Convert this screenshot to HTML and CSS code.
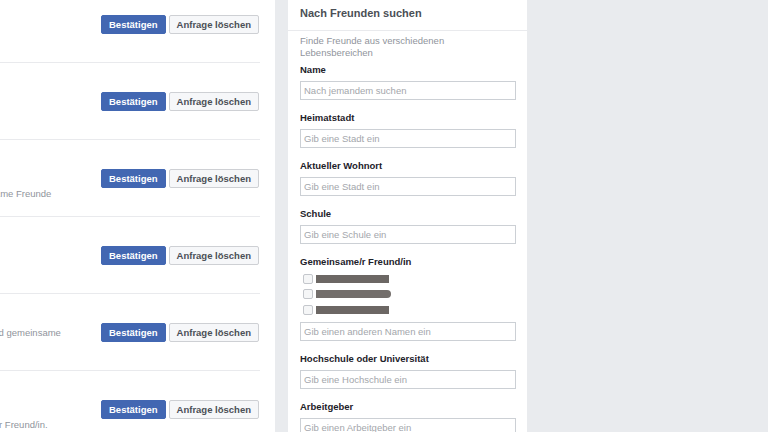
FILE: index.html
```html
<!DOCTYPE html>
<html lang="de">
<head>
    <meta charset="UTF-8">
    <meta name="viewport" content="width=device-width, initial-scale=1.0">
    <title>Freundschaftsanfragen</title>
    <link rel="stylesheet" href="styles.css">
</head>
<body>

    <div class="page">
        <div class="requests">
            <div class="request">
                <div class="photo"></div>
                <div class="info">
                    <a class="name" href="#">Anna Becker</a>
                    <p class="meta">3 gemeinsame Freunde</p>
                </div>
                <div class="actions">
                    <button class="btn confirm">Bestätigen</button>
                    <button class="btn delete">Anfrage löschen</button>
                </div>
            </div>
            <div class="request">
                <div class="photo"></div>
                <div class="info">
                    <a class="name" href="#">Tim Wagner</a>
                    <p class="meta">Wohnt in Hamburg</p>
                </div>
                <div class="actions">
                    <button class="btn confirm">Bestätigen</button>
                    <button class="btn delete">Anfrage löschen</button>
                </div>
            </div>
            <div class="request">
                <div class="photo"></div>
                <div class="info">
                    <a class="name" href="#">Lena Hoffmann</a>
                    <p class="meta">Wohnt in Köln</p>
                    <p class="meta">Jonas und 15 weitere gemeinsame Freunde</p>
                </div>
                <div class="actions">
                    <button class="btn confirm">Bestätigen</button>
                    <button class="btn delete">Anfrage löschen</button>
                </div>
            </div>
            <div class="request">
                <div class="photo"></div>
                <div class="info">
                    <a class="name" href="#">Paul Richter</a>
                    <p class="meta">8 gemeinsame Freunde</p>
                </div>
                <div class="actions">
                    <button class="btn confirm">Bestätigen</button>
                    <button class="btn delete">Anfrage löschen</button>
                </div>
            </div>
            <div class="request">
                <div class="photo"></div>
                <div class="info">
                    <a class="name" href="#">Sophie Klein</a>
                    <p class="meta">Lisa Schulz und Lukas Berg sind gemeinsame Freunde</p>
                </div>
                <div class="actions">
                    <button class="btn confirm">Bestätigen</button>
                    <button class="btn delete">Anfrage löschen</button>
                </div>
            </div>
            <div class="request">
                <div class="photo"></div>
                <div class="info">
                    <a class="name" href="#">Felix Braun</a>
                    <p class="meta">Studiert an der Uni Bonn</p>
                    <p class="meta">Michaela ist ein/e gemeinsame/r Freund/in.</p>
                </div>
                <div class="actions">
                    <button class="btn confirm">Bestätigen</button>
                    <button class="btn delete">Anfrage löschen</button>
                </div>
            </div>
        </div>

        <div class="sidebar">
            <div class="sidebar-header">Nach Freunden suchen</div>
            <div class="sidebar-body">
                <p class="intro">Finde Freunde aus verschiedenen Lebensbereichen</p>

                <label class="field-label">Name</label>
                <input class="field" type="text" placeholder="Nach jemandem suchen">

                <label class="field-label">Heimatstadt</label>
                <input class="field" type="text" placeholder="Gib eine Stadt ein">

                <label class="field-label">Aktueller Wohnort</label>
                <input class="field" type="text" placeholder="Gib eine Stadt ein">

                <label class="field-label">Schule</label>
                <input class="field" type="text" placeholder="Gib eine Schule ein">

                <label class="field-label tight">Gemeinsame/r Freund/in</label>
                <div class="friend-list">
                    <div class="friend"><input type="checkbox"><span class="hidden-name"></span></div>
                    <div class="friend"><input type="checkbox"><span class="hidden-name wide"></span></div>
                    <div class="friend"><input type="checkbox"><span class="hidden-name"></span></div>
                </div>
                <input class="field" type="text" placeholder="Gib einen anderen Namen ein">

                <label class="field-label">Hochschule oder Universität</label>
                <input class="field" type="text" placeholder="Gib eine Hochschule ein">

                <label class="field-label">Arbeitgeber</label>
                <input class="field" type="text" placeholder="Gib einen Arbeitgeber ein">
            </div>
        </div>
    </div>

</body>
</html>
```

FILE: styles.css
```css
* {
    margin: 0;
    padding: 0;
    box-sizing: border-box;
    font-family: 'Liberation Sans', Arial, sans-serif;
}
body {
    background-color: #e9ebee;
    overflow: hidden;
}
.page {
    display: flex;
    align-items: flex-start;
    gap: 13px;
}

/* request list, scrolled so the photos sit left of the view */
.requests {
    width: 495px;
    margin-left: -220px;
    padding: 0 15px 0 12px;
    background: #fff;
    min-height: 460px;
}
.request {
    display: flex;
    align-items: center;
    height: 77px;
    border-bottom: 1px solid #e9eaed;
}
.request:first-child {
    margin-top: -14px;
}
.photo {
    width: 62px;
    height: 62px;
    background: #dcdee3;
    flex: none;
}
.info {
    width: 215px;
    margin-left: 12px;
    font-size: 9.5px;
    line-height: 15px;
}
.name {
    color: #365899;
    font-weight: bold;
    text-decoration: none;
}
.meta {
    color: #90949c;
}
.actions {
    margin-left: auto;
    margin-right: 1px;
    display: flex;
    gap: 3px;
}
.btn {
    height: 19px;
    padding: 0 7px;
    border: 1px solid;
    border-radius: 2px;
    font-size: 9.5px;
    font-weight: bold;
    cursor: pointer;
}
.btn.confirm {
    background: #4267b2;
    border-color: #4267b2;
    color: #fff;
}
.btn.delete {
    background: #f6f7f9;
    border-color: #ced0d4;
    color: #4b4f56;
}

/* search box */
.sidebar {
    width: 239px;
    background: #fff;
    min-height: 460px;
}
.sidebar-header {
    height: 31px;
    padding: 7px 12px 0;
    border-bottom: 1px solid #e9eaed;
    font-size: 11px;
    line-height: 13px;
    font-weight: bold;
    color: #4b4f56;
}
.sidebar-body {
    padding: 4px 11px 0 12px;
}
.intro {
    font-size: 9.5px;
    line-height: 12px;
    color: #90949c;
    margin-bottom: 5px;
}
.field-label {
    display: block;
    font-size: 9.5px;
    line-height: 12px;
    font-weight: bold;
    color: #1d2129;
    margin-bottom: 5px;
}
.field-label.tight {
    margin-bottom: 3px;
}
.field {
    display: block;
    width: 100%;
    height: 19px;
    border: 1px solid #ccd0d5;
    outline: 0;
    padding: 0 3px;
    font-size: 9.5px;
    color: #1d2129;
    margin-bottom: 12px;
}
.field::placeholder {
    color: #a3a6ab;
}
.friend-list {
    margin-bottom: 4px;
}
.friend {
    display: flex;
    align-items: center;
    height: 15.5px;
}
.friend input {
    appearance: none;
    width: 10px;
    height: 10px;
    margin-left: 3px;
    border: 1px solid #c4c7cc;
    border-radius: 2px;
    background: #f5f6f7;
}
.hidden-name {
    width: 73px;
    height: 8px;
    margin-left: 3px;
    background: #6c6764;
}
.hidden-name.wide {
    width: 75px;
    border-radius: 0 4px 4px 0;
    background: #736e6b;
}
```
